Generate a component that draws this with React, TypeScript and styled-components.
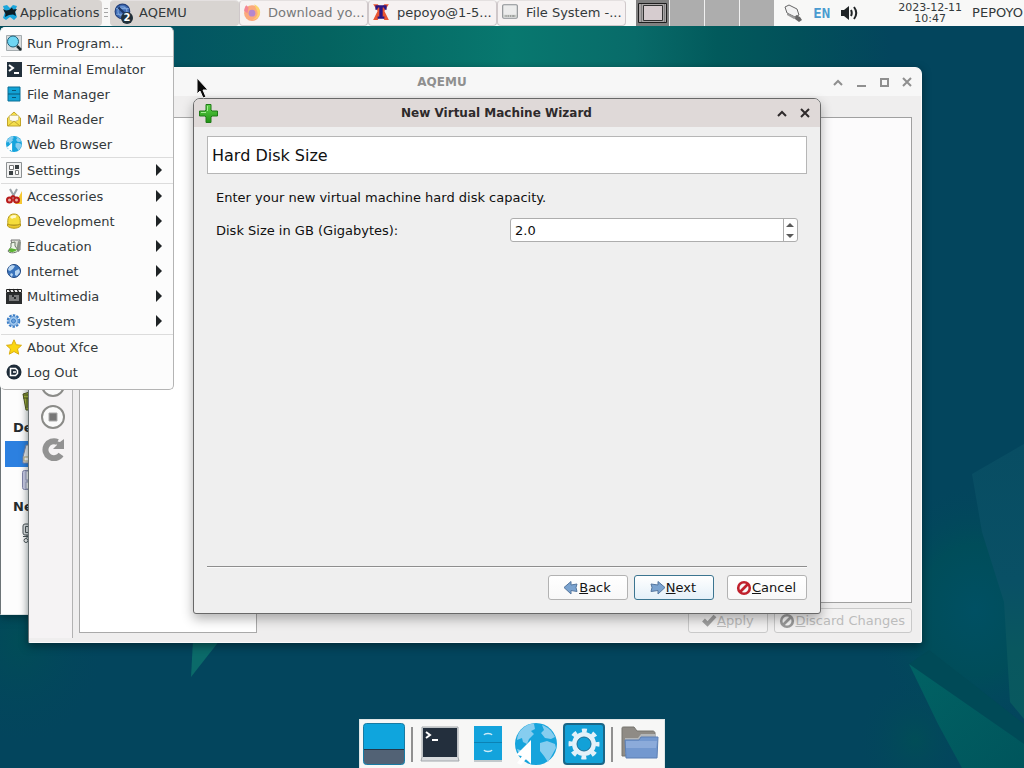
import React from "react";
import styled, { createGlobalStyle, css } from "styled-components";

const GlobalStyle = createGlobalStyle`
  * { box-sizing: border-box; }
  body {
    margin: 0;
    background: #03455d;
    font-family: "DejaVu Sans", sans-serif;
    font-size: 13px;
    color: #33393b;
  }
  button, input { font: inherit; color: inherit; margin: 0; padding: 0; }
  svg { display: block; flex: none; }
`;

const Desktop = styled.main`
  position: relative;
  min-height: 100vh;
  overflow: hidden;
`;

const Wallpaper = styled.svg`
  position: absolute;
  inset: 0;
  width: 100%;
  height: 100%;
`;

/* ---------- top panel ---------- */

const Panel = styled.header`
  position: relative;
  display: flex;
  align-items: stretch;
  height: 26px;
  background: #f8f8f7;
  white-space: nowrap;
`;

const panelItem = css`
  display: flex;
  align-items: center;
  border: 0;
  background: none;
  text-align: left;
`;

const ApplicationsButton = styled.button`
  ${panelItem}
  gap: 2px;
  width: 102px;
  padding: 0 2px 2px;
  background: #d8d4d1;
  border-radius: 0 4px 4px 0;
`;

const PanelHandle = styled.div`
  display: flex;
  flex-direction: column;
  gap: 3px;
  width: 8px;
  padding: 8px 2px;

  i { height: 1px; background: #a5a5a5; }
`;

const TaskList = styled.nav`
  display: flex;
`;

const TaskButton = styled.button<{ $active?: boolean; $dim?: boolean }>`
  ${panelItem}
  position: relative;
  width: 129px;
  gap: 7px;
  padding: 0 3px 2px;
  border: 1px solid ${(p) => (p.$active ? "#d8d4d1" : "#cfc8ca")};
  border-top-color: #e4e0e0;
  border-radius: 4px;
  background: ${(p) => (p.$active ? "#d8d4d1" : "#f6f2f2")};
  color: ${(p) => (p.$dim ? "#77797a" : "#33393b")};
`;

const TaskCount = styled.span`
  position: absolute;
  left: 10px;
  top: 11px;
  width: 12px;
  height: 12px;
  border-radius: 50%;
  background: #22313a;
  color: #fff;
  font-size: 10px;
  font-weight: bold;
  line-height: 12px;
  text-align: center;
`;

const Pager = styled.div`
  display: flex;
  gap: 1px;
  margin-left: 10px;
  background: #f0f0f0;
`;

const Workspace = styled.button<{ $current?: boolean }>`
  display: grid;
  place-items: center;
  width: ${(p) => (p.$current ? 33 : 34)}px;
  border: 0;
  background: ${(p) => (p.$current ? "#808080" : "#adadad")};
`;

const Tray = styled.div`
  display: flex;
  align-items: center;
  gap: 10px;
  margin-left: auto;
  padding: 0 1px 1px 0;
`;

const Keyboard = styled.span`
  font: bold 14px/16px "DejaVu Sans Mono", monospace;
  color: #4a9bd0;
`;

const Clock = styled.time`
  margin-left: 30px;
  font-size: 11px;
  line-height: 11px;
  text-align: center;
`;

/* ---------- applications menu ---------- */

const Menu = styled.nav`
  position: absolute;
  left: 0;
  top: 27px;
  z-index: 5;
  width: 174px;
  padding: 3px 0 4px;
  border: 1px solid #b4b4b4;
  border-left-color: #fcfcfc;
  border-top-color: #fcfcfc;
  border-radius: 5px;
  background: #fcfcfc;
`;

const MenuRow = styled.button`
  display: flex;
  align-items: center;
  gap: 5px;
  width: 100%;
  height: 25px;
  padding: 0 11px 1px 5px;
  border: 0;
  background: none;
  text-align: left;
  white-space: nowrap;
`;

const MenuLabel = styled.span`
  flex: 1;
`;

const MenuRule = styled.hr`
  height: 1px;
  margin: 0;
  border: 0;
  background: #dcdcdc;
`;

/* ---------- windows ---------- */

const FileManager = styled.section`
  position: absolute;
  left: 0;
  top: 120px;
  bottom: 153px;
  width: 30%;
  padding: 268px 5px 0 4px;
  border-left: 1px solid #6c7477;
  border-bottom: 1px solid #dfe5e6;
  background: #fdfdfd;
  box-shadow: 0 2px 8px rgba(0, 20, 25, 0.5);
`;

const Place = styled.div<{ $selected?: boolean }>`
  display: flex;
  align-items: center;
  height: 26px;
  padding-left: 17px;
  background: ${(p) => (p.$selected ? "#2c80e0" : "transparent")};
`;

const PlaceHeading = styled.h3`
  margin: 0;
  padding: 0 8px;
  font-size: 13px;
  line-height: 27px;
  color: #262b2d;
`;

const AppWindow = styled.section`
  position: absolute;
  left: 28px;
  right: 102px;
  top: 67px;
  bottom: 125px;
  display: flex;
  flex-direction: column;
  border: 1px solid #fbfbfb;
  border-left-color: #6b7375;
  border-radius: 7px 7px 2px 2px;
  background: #efeeee;
  box-shadow: 0 3px 9px rgba(0, 20, 25, 0.55);
`;

const TitleBar = styled.header<{ $active?: boolean }>`
  display: flex;
  align-items: center;
  height: 28px;
  padding-right: ${(p) => (p.$active ? 4 : 3)}px;
  border-radius: 6px 6px 0 0;
  background: ${(p) => (p.$active ? "#dfd9d8" : "#f7f7f7")};
  color: ${(p) => (p.$active ? "#2e2a2b" : "#8f8f8f")};
`;

const TitleIcon = styled.span`
  display: grid;
  place-items: center;
  width: 29px;
`;

const WindowTitle = styled.h2`
  flex: 1;
  margin: 0;
  font-size: 12px;
  text-align: center;
`;

const WindowButton = styled.button`
  display: grid;
  place-items: center;
  width: 23px;
  height: 22px;
  border: 0;
  background: none;
`;

const AppBody = styled.div`
  flex: 1;
  display: flex;
  min-height: 0;
  padding: 21px 9px 9px 0;
`;

const ToolStrip = styled.div`
  display: flex;
  flex-direction: column;
  align-items: center;
  justify-content: flex-start;
  gap: 8px;
  width: 44px;
  margin: -15px 6px -5px 0;
  padding: 271px 0 0 4px;
  border-right: 1px solid #b2b2b2;
  background: #f5f3f4;
`;

const ToolButton = styled.button`
  padding: 0;
  border: 0;
  background: none;
`;

const MachineList = styled.div`
  width: 178px;
  border: 1px solid #a9a9a9;
  background: #fff;
`;

const Details = styled.div`
  flex: 1;
  display: flex;
  flex-direction: column;
  gap: 5px;
  margin-left: 6px;
`;

const DetailsPane = styled.div`
  flex: 1;
  border: 1px solid #a0a0a0;
  background: #fcfbfc;
`;

const ButtonRow = styled.div`
  display: flex;
  justify-content: flex-end;
  gap: 6px;
`;

const PushButton = styled.button<{ $default?: boolean; $spaced?: boolean }>`
  display: flex;
  align-items: center;
  justify-content: center;
  min-width: 80px;
  height: 25px;
  padding: 0 6px 0 4px;
  margin-left: ${(p) => (p.$spaced ? 7 : 0)}px;
  border: 1px solid ${(p) => (p.$default ? "#3c7590" : "#b2b2b2")};
  border-radius: 3px;
  background: ${(p) =>
    p.$default
      ? "linear-gradient(#ffffff, #e4f0f8)"
      : "linear-gradient(#ffffff, #f8f8f8)"};
  color: #141414;
  white-space: nowrap;

  &:disabled {
    border-color: #c9c9c9;
    background: #f3f2f2;
    color: #bcbcbc;
  }
`;

const Dialog = styled.section`
  position: absolute;
  left: 193px;
  right: 203px;
  top: 98px;
  bottom: 154px;
  display: flex;
  flex-direction: column;
  border: 1px solid #686868;
  border-radius: 7px 7px 3px 3px;
  background: #efefef;
  color: #101010;
  box-shadow: 0 5px 12px rgba(0, 0, 0, 0.3);
`;

const DialogForm = styled.form`
  flex: 1;
  display: flex;
  flex-direction: column;
  padding: 9px 13px 13px;
`;

const DialogHeading = styled.h1`
  margin: 0;
  padding: 2px 4px 0;
  border: 1px solid #b6b6b6;
  background: #fff;
  font-size: 16px;
  font-weight: normal;
  line-height: 34px;
`;

const DialogFields = styled.div`
  flex: 1;
  padding: 12px 9px;
`;

const Hint = styled.p`
  margin: 0;
  line-height: 24px;
`;

const FieldRow = styled.div`
  display: grid;
  grid-template-columns: 1fr 288px;
  align-items: center;
  margin-top: 8px;
`;

const SpinBox = styled.div`
  display: flex;
  height: 24px;
  border: 1px solid #adadad;
  border-radius: 3px;
  background: #fff;
`;

const SpinInput = styled.input`
  flex: 1;
  min-width: 0;
  padding: 0 4px;
  border: 0;
  border-radius: 3px;
  outline: 0;
  background: none;
  appearance: textfield;

  &::-webkit-inner-spin-button { appearance: none; margin: 0; }
`;

const SpinButtons = styled.div`
  display: flex;
  flex-direction: column;
  width: 14px;
  padding-right: 1px;
  border-left: 1px solid #adadad;
`;

const SpinButton = styled.button`
  flex: 1;
  display: grid;
  place-items: center;
  border: 0;
  background: none;
`;

const DialogRule = styled.hr`
  height: 2px;
  margin: 0 0 7px;
  border: 0;
  border-top: 1px solid #8e8e8e;
  border-bottom: 1px solid #fafafa;
`;

const Pointer = styled.svg`
  position: absolute;
  left: 196px;
  top: 77px;
`;

/* ---------- dock ---------- */

const DockArea = styled.div`
  position: absolute;
  inset: auto 0 0;
  display: flex;
  justify-content: center;
`;

const Dock = styled.nav`
  display: flex;
  align-items: center;
  height: 49px;
  border: 1px solid #dfe6e6;
  border-bottom: 0;
  background: #f7f7f6;
`;

const DockButton = styled.button`
  display: grid;
  place-items: center;
  width: 48px;
  height: 48px;
  border: 0;
  background: none;
`;

const DockRule = styled.span`
  width: 2px;
  height: 35px;
  margin: 0 3px;
  background: #909090;
`;

/* ---------- drawings ---------- */

const Backdrop = () => (
  <Wallpaper viewBox="0 0 1024 768" preserveAspectRatio="none" aria-hidden="true">
    <defs>
      <linearGradient id="top" x1="0" x2="1" y1="0" y2="0">
        <stop offset="0" stopColor="#024a58" />
        <stop offset="0.17" stopColor="#035462" />
        <stop offset="0.32" stopColor="#046360" />
        <stop offset="0.5" stopColor="#08786f" />
        <stop offset="0.62" stopColor="#086b69" />
        <stop offset="0.7" stopColor="#025a5c" />
        <stop offset="0.78" stopColor="#02505a" />
        <stop offset="0.87" stopColor="#03455d" />
      </linearGradient>
      <radialGradient id="glow">
        <stop offset="0" stopColor="#005063" />
        <stop offset="0.5" stopColor="#004d5a" />
        <stop offset="1" stopColor="#03455d" stopOpacity="0" />
      </radialGradient>
      <radialGradient id="corner">
        <stop offset="0" stopColor="#014d57" />
        <stop offset="1" stopColor="#03455d" stopOpacity="0" />
      </radialGradient>
      <linearGradient id="shard" x1="0" x2="0" y1="0" y2="1">
        <stop offset="0" stopColor="#084d63" />
        <stop offset="0.5" stopColor="#095065" />
        <stop offset="0.75" stopColor="#09575f" />
        <stop offset="1" stopColor="#08595f" />
      </linearGradient>
      <linearGradient id="wedge" x1="0" x2="1" y1="0" y2="1">
        <stop offset="0" stopColor="#016264" />
        <stop offset="1" stopColor="#00555c" />
      </linearGradient>
    </defs>
    <rect width="1024" height="768" fill="#03455d" />
    <rect width="1024" height="110" fill="url(#top)" />
    <ellipse cx="20" cy="640" rx="90" ry="110" fill="url(#corner)" />
    <path d="M193 640h27l-29 37z" fill="#0b6a69" />
    <ellipse cx="975" cy="610" rx="110" ry="130" fill="url(#glow)" />
    <ellipse cx="915" cy="740" rx="60" ry="70" fill="url(#corner)" />
    <path d="M972 474l52-30v275l-14-17-6-100-22-70z" fill="url(#shard)" />
    <path d="M909 664l20-14 95 74v30z" fill="#004a57" />
    <path d="M909 664l115 80v24h-62l-24-44z" fill="url(#wedge)" />
  </Wallpaper>
);

const Svg = ({ size = 16, box = 16, children }: { size?: number; box?: number; children: React.ReactNode }) => (
  <svg width={size} height={size} viewBox={`0 0 ${box} ${box}`} fill="none" aria-hidden="true">
    {children}
  </svg>
);

const XfceIcon = () => (
  <Svg>
    <path d="M1 2l4-1 3 3 3-3 4 1-2 5 2 6-3 3-4-3-4 3-3-2 2-6z" fill="#1ba6dc" />
    <path d="M1 5l3 1.500 3-.5 3-2.500 1 2 4-.5-2 3 1 4-3-1.500-4 .5-4 2 .5-3z" fill="#0d1c24" />
  </Svg>
);

const GlobeIcon = () => (
  <Svg>
    <circle cx="8" cy="8" r="6.500" fill="#3a74bd" stroke="#1d4580" />
    <path d="M3 4c2-2 5-2 6-1L7 6 4 8 2 7zM9 8l4-2 1 3-3 4-2-1zM5 10l2 1-1 3-2-2z" fill="#b9d6f2" />
  </Svg>
);

const QemuIcon = () => (
  <Svg size={18}>
    <circle cx="7.500" cy="7.500" r="6.500" fill="#3f6cb4" stroke="#22407c" />
    <circle cx="7.500" cy="7.500" r="4" stroke="#7fa6dc" />
    <path d="M2 5h11M2 10h11" stroke="#7fa6dc" />
    <path d="M4 4l6 6" stroke="#1b3566" strokeWidth="2" />
  </Svg>
);

const FirefoxIcon = () => (
  <Svg size={18}>
    <circle cx="8" cy="9" r="7" fill="#fba97c" />
    <path d="M10 1c4 2 6 5 5 9-1 3-4 5-7 5 5-2 6-6 4-9z" fill="#fcd36a" />
    <path d="M1 7c0-2 1-4 2-5l2 2-1 5z" fill="#f48694" />
    <circle cx="8" cy="9" r="3" fill="#b487cf" />
  </Svg>
);

const TermXIcon = () => (
  <Svg size={18}>
    <path d="M1 1l4 6-4 8h4l3-5 3 5h4l-4-8 4-6h-4L8 4 5 1z" fill="#ea5632" />
    <path d="M3 2h10v4h-1.500L10.500 4H9.500v8H11v2H5v-2h1.500V4h-1L4.500 6H3z" fill="#2a1785" />
  </Svg>
);

const DriveIcon = () => (
  <Svg size={18}>
    <rect x="1.500" y="1.500" width="13" height="12" rx="1" fill="#ececec" stroke="#8b8f92" />
    <path d="M2 11.500h12" stroke="#c6cac6" strokeWidth="2" />
    <path d="M4 11.500h1M6 11.500h1M8 11.500h1M10 11.500h2" stroke="#777" />
  </Svg>
);

const MiniDesktop = () => (
  <svg width="31" height="22" viewBox="0 0 31 22" aria-hidden="true">
    <path d="M1.500 1.500h28v19h-28z" fill="#a9a5a6" stroke="#1e1e1e" />
    <path d="M6.500 3.500h19v15h-19z" fill="#d6cccf" stroke="#333" />
    <path d="M4.500 2v18M27.500 2v18" stroke="#808080" />
  </svg>
);

const PlugIcon = () => (
  <Svg size={20} box={20}>
    <path d="M2 4l4-2 8 4 2 6-4 2-8-4z" fill="#f3f3f3" stroke="#666" />
    <path d="M4 10l8 4 3-1v2l-4 1-7-4z" fill="#999" />
    <path d="M13 12l4 2 2 3-3 2-4-3z" fill="#666" />
  </Svg>
);

const SpeakerIcon = () => (
  <Svg size={18} box={18}>
    <path d="M1 6h3l5-4v14l-5-4H1z" fill="#202426" />
    <path d="M11 6c1 2 1 4 0 6M14 3c3 4 3 8 0 12" stroke="#202426" strokeWidth="2" />
  </Svg>
);

const SearchIcon = () => (
  <Svg>
    <path d="M.5.500h15v15H.5z" fill="#d7dcde" stroke="#a5acaf" />
    <circle cx="7" cy="6.500" r="5.500" fill="#6fd6f3" stroke="#1f5f78" />
    <path d="M11 11l4 4" stroke="#1e2b30" strokeWidth="2.500" />
  </Svg>
);

const TerminalIcon = () => (
  <Svg>
    <path d="M1 1h15v15H1z" fill="#22303c" />
    <path d="M3 4l4 3-4 3M8 12h5" stroke="#fff" strokeWidth="2" />
  </Svg>
);

const CabinetIcon = () => (
  <Svg>
    <path d="M2 1h12v14H2z" fill="#12a3d6" stroke="#0a6f96" />
    <path d="M2 8h12M6 4.500h4M6 11.500h4" stroke="#0a5878" />
  </Svg>
);

const MailIcon = () => (
  <Svg>
    <path d="M1.500 7L8 1l6.500 6v8h-13z" fill="#f4df4c" stroke="#c2a52a" />
    <path d="M3.500 4.500h9V9L8 11 3.500 9z" fill="#fdfbee" stroke="#d6c98a" />
    <path d="M2 15l6-5 6 5" stroke="#c2a52a" />
  </Svg>
);

const BrowserIcon = ({ size = 16 }: { size?: number }) => (
  <Svg size={size} box={42}>
    <circle cx="21" cy="21" r="21" fill="#16a4dc" />
    <path d="M6 7c4-4 9-7 13-6l1 5-4 2 3 3-5 5-2 5-4-2-1-4-5 2c0-4 2-8 4-10zM27 2c6 2 10 6 13 12l-4 2-6-1-4-5 3-3zM25 20l7-2 8 3 1 4-5 9-3 5-4-6-4-5zM2 26l6 2 7 6-1 4C8 36 4 32 2 26z" fill="#86cdef" />
    <path d="M16 17L1 32l6 1-5 7 4 2 5-6 5 5z" fill="#fff" />
  </Svg>
);

const SettingsIcon = () => (
  <Svg>
    <path d="M.5.500h15v15H.5z" fill="#f2f2f2" stroke="#8d9193" />
    <path d="M3.500 3.500h4v4h-4zM9.500 8.500h3v4h-3z" fill="#fff" stroke="#777" />
    <path d="M9 3h4v4H9zM3 9h4v4H3z" fill="#3a3f42" />
  </Svg>
);

const ScissorsIcon = () => (
  <Svg>
    <path d="M16 3v13H9z" fill="#f5c733" />
    <path d="M4 1l5 9M11 1L6 10" stroke="#9aa3a8" strokeWidth="2" />
    <circle cx="3.500" cy="12" r="2.500" fill="#e9b0a8" stroke="#b81b1b" strokeWidth="2" />
    <circle cx="10.500" cy="12" r="2.500" fill="#e9b0a8" stroke="#b81b1b" strokeWidth="2" />
    <path d="M5 9l2-1 2 1" stroke="#b81b1b" strokeWidth="2" />
  </Svg>
);

const HelmetIcon = () => (
  <Svg>
    <path d="M2 12C1 5 3 1 8 1s7 4 6 11z" fill="#f5dd3c" stroke="#b79a1d" />
    <path d="M1.500 11c3 2 10 2 13 0v2c-3 3-10 3-13 0z" fill="#ecc92c" stroke="#b79a1d" />
    <path d="M5 5c1-1 3-2 5-1" stroke="#fffad0" strokeWidth="3" />
  </Svg>
);

const FlaskIcon = () => (
  <Svg>
    <path d="M5 2h9v10H7z" fill="#dfe3d8" stroke="#777" />
    <path d="M12 3l3 1-2 10-3-1z" fill="#8c9488" />
    <path d="M5 5l4-1v4l3 4c0 3-9 4-10 1l3-4z" fill="#eef6e9" stroke="#6c7a66" />
    <path d="M3 11c3-2 5 1 8 0 0 3-7 4-8 2z" fill="#5cb434" />
  </Svg>
);

const ClapperIcon = () => (
  <Svg>
    <path d="M0 5h16v11H0z" fill="#2b2d2e" />
    <path d="M.5 1.500h15v3H.5z" fill="#f2f2f2" stroke="#222" />
    <path d="M3 1l2 4M7 1l2 4M11 1l2 4" stroke="#222" strokeWidth="1.500" />
    <path d="M3 8h3M8 8h5M3 10h5M10 10h3M3 12h10" stroke="#c9c9c9" />
  </Svg>
);

const SystemIcon = () => (
  <Svg>
    <circle cx="7.500" cy="8" r="5.800" stroke="#3c7ec6" strokeWidth="2" strokeDasharray="2.500 1.200" />
    <circle cx="7.500" cy="8" r="4.500" fill="#a5cbf0" stroke="#5a93d2" />
    <circle cx="7.500" cy="8" r="2" fill="#6fa3dc" stroke="#3c7ec6" />
  </Svg>
);

const StarIcon = () => (
  <Svg>
    <path d="M8 .8l2.200 4.900 5.300.6-4 3.600 1.200 5.300L8 12.500l-4.700 2.700 1.200-5.300-4-3.600 5.300-.6z" fill="#fbd60f" stroke="#d9ad12" />
  </Svg>
);

const LogOutIcon = () => (
  <Svg>
    <circle cx="8" cy="8" r="7.500" fill="#1d2b38" />
    <path d="M4.500 4.500h5l2 2v3l-2 2h-5z" stroke="#fff" strokeWidth="1.500" />
    <path d="M7 8h3" stroke="#fff" strokeWidth="1.500" />
  </Svg>
);

const SubmenuArrow = () => (
  <svg width="6" height="12" viewBox="0 0 6 12" aria-hidden="true">
    <path d="M0 0l6 6-6 6z" fill="#1f2325" />
  </svg>
);

const TrashIcon = () => (
  <Svg size={22} box={22}>
    <path d="M1 4l10-3 10 3-2 16H4z" fill="#a9b83a" stroke="#4d5420" />
    <path d="M1 5h20M1 8h20M5 8v10M9 8v10" stroke="#4d5420" />
  </Svg>
);

const DiskIcon = () => (
  <Svg size={20} box={20}>
    <path d="M4 1h12l3 12v6H1v-6z" fill="#eceef2" stroke="#7d85a0" />
    <path d="M2 13h16v4H2z" fill="#fff" stroke="#b5a878" />
  </Svg>
);

const FloppyIcon = () => (
  <Svg size={20} box={20}>
    <rect x=".5" y=".5" width="19" height="19" rx="2" fill="#c9cbe6" stroke="#8386aa" />
    <path d="M4 1h12v9H4zM4 12h12v7H4z" fill="#fff" stroke="#9a9cbd" />
  </Svg>
);

const NetworkIcon = () => (
  <Svg size={20} box={20}>
    <rect x="1" y="1" width="14" height="11" rx="2" fill="#dfe2e4" stroke="#4d5558" />
    <path d="M3.500 3.500h9v6h-9zM1 13.500h14M5 12v3" stroke="#4d5558" />
    <circle cx="4" cy="17.500" r="2" stroke="#4d5558" />
    <path d="M6 17.500h10" stroke="#4d5558" />
  </Svg>
);

const RoundTool = ({ children }: { children: React.ReactNode }) => (
  <Svg size={24} box={24}>
    <circle cx="12" cy="12" r="11" fill="#fafafa" stroke="#8b8b88" strokeWidth="2" />
    {children}
  </Svg>
);

const ReloadIcon = () => (
  <Svg size={24} box={24}>
    <path d="M20 17.500A8.500 8.500 0 1 1 16.500 5" stroke="#929292" strokeWidth="6" />
    <path d="M23 2v10H12l4-4-2-4 5 1z" fill="#929292" />
  </Svg>
);

const PlusIcon = () => (
  <Svg size={21} box={21}>
    <defs>
      <linearGradient id="plus" x1="0" x2="0" y1="0" y2="1">
        <stop offset="0" stopColor="#5fd24a" />
        <stop offset="1" stopColor="#1f9212" />
      </linearGradient>
    </defs>
    <path
      d="M8 1.500h5V7l1 1h5.500v5H14l-1 1v5.500H8V14l-1-1H1.500V8H7l1-1z"
      fill="url(#plus)"
      stroke="#207a18"
      strokeLinejoin="round"
    />
    <path d="M9.500 8V3M3 9.500h5" stroke="#a4ec94" />
  </Svg>
);

const ShadeGlyph = () => (
  <Svg size={12} box={12}><path d="M2 9l4-4 4 4" stroke="currentColor" strokeWidth="2" /></Svg>
);
const MinimizeGlyph = () => (
  <Svg size={12} box={12}><path d="M2 10h9" stroke="currentColor" strokeWidth="2" /></Svg>
);
const MaximizeGlyph = () => (
  <Svg size={12} box={12}><path d="M3 3h7v7H3z" stroke="currentColor" strokeWidth="2" /></Svg>
);
const CloseGlyph = () => (
  <Svg size={12} box={12}><path d="M2 2l8 8M10 2l-8 8" stroke="currentColor" strokeWidth="2" /></Svg>
);

const ArrowIcon = ({ back }: { back?: boolean }) => (
  <Svg>
    <path
      d={back ? "M1 7.500L8 1.500V5l6-1-1 3.500 1 4-6-1v3.500z" : "M15 7.500L8 1.500V5L1 4l1 3.500-1 4 7-1v3.500z"}
      fill="#7ba3cf"
      stroke="#55779f"
      strokeLinejoin="round"
    />
  </Svg>
);

const ForbiddenIcon = ({ color }: { color: string }) => (
  <Svg>
    <circle cx="8" cy="8" r="5.800" fill="#f7f7f7" stroke={color} strokeWidth="2.600" />
    <path d="M4 12l8-8" stroke={color} strokeWidth="2.600" />
  </Svg>
);

const TickIcon = () => (
  <Svg><path d="M2.500 7l4 4L14 3" stroke="#a0a0a0" strokeWidth="4" /></Svg>
);

const DockDesktopIcon = () => (
  <Svg size={42} box={42}>
    <rect x=".5" y=".5" width="41" height="41" rx="3" fill="#0fa5dd" stroke="#187ba3" />
    <path d="M1 27h40v11c0 2-1 3-3 3H4c-2 0-3-1-3-3z" fill="#526275" />
    <path d="M1 26.500h40" stroke="#243749" />
  </Svg>
);

const DockTerminalIcon = () => (
  <Svg size={40} box={40}>
    <path d="M2 3h36v30l1 4H1l1-4z" fill="#d9dcdf" stroke="#a2a7ab" />
    <path d="M3 4h34v29H3z" fill="#232f3d" />
    <path d="M6 8l4 3-4 3M12 16h6" stroke="#fff" strokeWidth="2" />
  </Svg>
);

const DockCabinetIcon = () => (
  <Svg size={38} box={38}>
    <path d="M5 34h28v3H5z" fill="#c3c9cc" />
    <path d="M5 1h28v34H5z" fill="#13a3dc" />
    <path d="M5 17.500h28" stroke="#0c82b4" />
    <path d="M15 10c1-2 7-2 8 0M15 25c1 2 7 2 8 0" stroke="#cdeaf6" strokeWidth="1.500" />
  </Svg>
);

const DockSettingsIcon = () => (
  <Svg size={42} box={42}>
    <rect x="1" y="1" width="40" height="40" rx="3" fill="#12a1d8" stroke="#1a6687" strokeWidth="2" />
    <circle cx="21" cy="21" r="13.500" stroke="#e3f1f9" strokeWidth="4" strokeDasharray="5 5.600" strokeDashoffset="2.500" />
    <circle cx="21" cy="21" r="9.500" stroke="#e3f1f9" strokeWidth="5" />
    <circle cx="21" cy="21" r="7" stroke="#1d6d92" />
  </Svg>
);

const DockFolderIcon = () => (
  <Svg size={40} box={40}>
    <path d="M2 4c0-1 1-1 2-1h10l3 4h16c1 0 2 1 2 2v23H2z" fill="#8f8b85" stroke="#77756f" />
    <path d="M5 30V14h13l3-4h15v20z" fill="#b3b6b8" />
    <path d="M5 16h14l2-3h17l-1 21H6z" fill="#7398cf" stroke="#5c7fb3" />
    <path d="M6 17h31l-1 7H6z" fill="#8cabda" />
  </Svg>
);

/* ---------- content ---------- */

type Entry = { label: string; icon: React.ReactNode; submenu?: boolean };

const menuGroups: Entry[][] = [
  [{ label: "Run Program...", icon: <SearchIcon /> }],
  [
    { label: "Terminal Emulator", icon: <TerminalIcon /> },
    { label: "File Manager", icon: <CabinetIcon /> },
    { label: "Mail Reader", icon: <MailIcon /> },
    { label: "Web Browser", icon: <BrowserIcon /> },
  ],
  [{ label: "Settings", icon: <SettingsIcon />, submenu: true }],
  [
    { label: "Accessories", icon: <ScissorsIcon />, submenu: true },
    { label: "Development", icon: <HelmetIcon />, submenu: true },
    { label: "Education", icon: <FlaskIcon />, submenu: true },
    { label: "Internet", icon: <GlobeIcon />, submenu: true },
    { label: "Multimedia", icon: <ClapperIcon />, submenu: true },
    { label: "System", icon: <SystemIcon />, submenu: true },
  ],
  [
    { label: "About Xfce", icon: <StarIcon /> },
    { label: "Log Out", icon: <LogOutIcon /> },
  ],
];

const TopPanel = () => (
  <Panel>
    <ApplicationsButton><XfceIcon />Applications</ApplicationsButton>
    <PanelHandle><i /><i /><i /></PanelHandle>
    <TaskList aria-label="Open windows">
      <TaskButton $active><QemuIcon /><TaskCount>2</TaskCount>AQEMU</TaskButton>
      <TaskButton $dim><FirefoxIcon />Download yo...</TaskButton>
      <TaskButton><TermXIcon />pepoyo@1-5...</TaskButton>
      <TaskButton><DriveIcon />File System -...</TaskButton>
    </TaskList>
    <Pager>
      <Workspace $current aria-label="Workspace 1"><MiniDesktop /></Workspace>
      <Workspace aria-label="Workspace 2" />
      <Workspace aria-label="Workspace 3" />
      <Workspace aria-label="Workspace 4" />
    </Pager>
    <Tray>
      <PlugIcon />
      <Keyboard>EN</Keyboard>
      <SpeakerIcon />
      <Clock>2023-12-11<br />10:47</Clock>
      <span>PEPOYO</span>
    </Tray>
  </Panel>
);

const ApplicationsMenu = () => (
  <Menu aria-label="Applications">
    {menuGroups.map((group, i) => (
      <React.Fragment key={i}>
        {i > 0 && <MenuRule />}
        {group.map((entry) => (
          <MenuRow key={entry.label}>
            {entry.icon}
            <MenuLabel>{entry.label}</MenuLabel>
            {entry.submenu && <SubmenuArrow />}
          </MenuRow>
        ))}
      </React.Fragment>
    ))}
  </Menu>
);

const Wizard = () => (
  <Dialog role="dialog" aria-label="New Virtual Machine Wizard">
    <TitleBar $active>
      <TitleIcon><PlusIcon /></TitleIcon>
      <WindowTitle>New Virtual Machine Wizard</WindowTitle>
      <WindowButton aria-label="Shade"><ShadeGlyph /></WindowButton>
      <WindowButton aria-label="Close"><CloseGlyph /></WindowButton>
    </TitleBar>
    <DialogForm onSubmit={(e) => e.preventDefault()}>
      <DialogHeading>Hard Disk Size</DialogHeading>
      <DialogFields>
        <Hint>Enter your new virtual machine hard disk capacity.</Hint>
        <FieldRow>
          <label htmlFor="disk-size">Disk Size in GB (Gigabytes):</label>
          <SpinBox>
            <SpinInput id="disk-size" type="number" step="0.1" defaultValue="2.0" />
            <SpinButtons>
              <SpinButton type="button" aria-label="Increase">
                <svg width="8" height="4" viewBox="0 0 8 4"><path d="M0 4l4-4 4 4z" fill="#5a5a5a" /></svg>
              </SpinButton>
              <SpinButton type="button" aria-label="Decrease">
                <svg width="8" height="4" viewBox="0 0 8 4"><path d="M0 0l4 4 4-4z" fill="#5a5a5a" /></svg>
              </SpinButton>
            </SpinButtons>
          </SpinBox>
        </FieldRow>
      </DialogFields>
      <DialogRule />
      <ButtonRow>
        <PushButton type="button"><ArrowIcon back /><span><u>B</u>ack</span></PushButton>
        <PushButton type="submit" $default><ArrowIcon /><span><u>N</u>ext</span></PushButton>
        <PushButton type="button" $spaced><ForbiddenIcon color="#c0202c" /><span><u>C</u>ancel</span></PushButton>
      </ButtonRow>
    </DialogForm>
  </Dialog>
);

export default function App() {
  return (
    <Desktop>
      <GlobalStyle />
      <Backdrop />
      <TopPanel />

      <FileManager aria-label="File System">
        <Place><TrashIcon /></Place>
        <PlaceHeading>Devices</PlaceHeading>
        <Place $selected><DiskIcon /></Place>
        <Place><FloppyIcon /></Place>
        <PlaceHeading>Network</PlaceHeading>
        <Place><NetworkIcon /></Place>
      </FileManager>

      <AppWindow aria-label="AQEMU">
        <TitleBar>
          <TitleIcon />
          <WindowTitle>AQEMU</WindowTitle>
          <WindowButton aria-label="Shade"><ShadeGlyph /></WindowButton>
          <WindowButton aria-label="Minimize"><MinimizeGlyph /></WindowButton>
          <WindowButton aria-label="Maximize"><MaximizeGlyph /></WindowButton>
          <WindowButton aria-label="Close"><CloseGlyph /></WindowButton>
        </TitleBar>
        <AppBody>
          <ToolStrip>
            <ToolButton aria-label="Pause">
              <RoundTool><path d="M9 8v8M15 8v8" stroke="#777" strokeWidth="3" /></RoundTool>
            </ToolButton>
            <ToolButton aria-label="Stop">
              <RoundTool><path d="M8 8h8v8H8z" fill="#777" stroke="#aaa" /></RoundTool>
            </ToolButton>
            <ToolButton aria-label="Reset"><ReloadIcon /></ToolButton>
          </ToolStrip>
          <MachineList />
          <Details>
            <DetailsPane />
            <ButtonRow>
              <PushButton disabled><TickIcon /><span><u>A</u>pply</span></PushButton>
              <PushButton disabled><ForbiddenIcon color="#9a9a9a" /><span><u>D</u>iscard Changes</span></PushButton>
            </ButtonRow>
          </Details>
        </AppBody>
      </AppWindow>

      <Wizard />

      <Pointer width="14" height="22" viewBox="0 0 14 22" aria-hidden="true">
        <path d="M1 1v16l3-3 3 7 3-1-3-7h5z" fill="#0a0a0a" stroke="#f5f5f5" />
      </Pointer>

      <ApplicationsMenu />

      <DockArea>
        <Dock aria-label="Dock">
          <DockButton aria-label="Show desktop"><DockDesktopIcon /></DockButton>
          <DockRule />
          <DockButton aria-label="Terminal"><DockTerminalIcon /></DockButton>
          <DockButton aria-label="Files"><DockCabinetIcon /></DockButton>
          <DockButton aria-label="Web"><BrowserIcon size={42} /></DockButton>
          <DockButton aria-label="Settings"><DockSettingsIcon /></DockButton>
          <DockRule />
          <DockButton aria-label="Home folder"><DockFolderIcon /></DockButton>
        </Dock>
      </DockArea>
    </Desktop>
  );
}
